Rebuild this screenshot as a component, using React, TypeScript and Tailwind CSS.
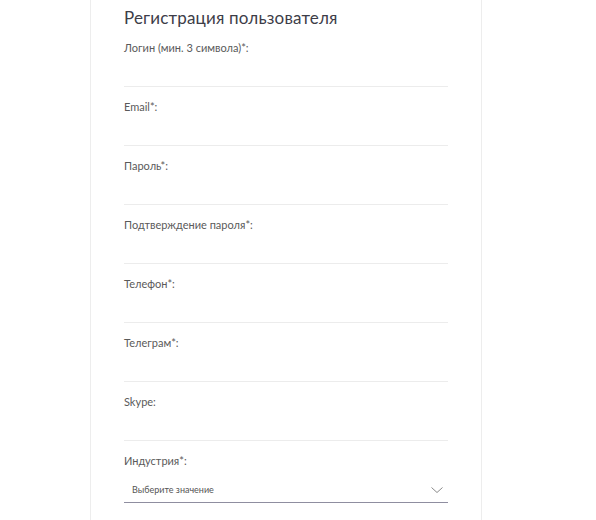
const fields = [
  "Логин (мин. 3 символа)*:",
  "Email*:",
  "Пароль*:",
  "Подтверждение пароля*:",
  "Телефон*:",
  "Телеграм*:",
  "Skype:",
];

function Field({ label }: { label: string }) {
  return (
    <div className="flex flex-col pb-[12px]">
      <label className="text-[11px] leading-4 text-[#5a5a5a]">{label}</label>
      <input className="h-[31px] border-b border-[#ececec] bg-transparent outline-none" />
    </div>
  );
}

export default function App() {
  return (
    <div className="min-h-[520px] bg-white" style={{ fontFamily: "Lato, 'Noto Sans', sans-serif" }}>
      <div className="ml-[90px] min-h-[520px] w-[392px] border-x border-[#ededed] px-[33px] pt-[6px]">
        <h1 className="mb-[10px] text-[17px] leading-6 tracking-[0.01em] text-[#3d3d48]">
          Регистрация пользователя
        </h1>
        {fields.map((f) => (
          <Field key={f} label={f} />
        ))}
        <div className="flex flex-col">
          <label className="text-[11px] leading-4 text-[#5a5a5a]">Индустрия*:</label>
          <div className="mt-[9px] flex h-[25px] items-center justify-between border-b border-[#8f8ea0] pl-2 pr-[5px]">
            <span className="text-[9px] text-[#555]">Выберите значение</span>
            <svg width="12" height="6" viewBox="0 0 12 6" fill="none" stroke="#8a8a8a" strokeWidth="1">
              <path d="M0.5 0.5 L6 5.5 L11.5 0.5" />
            </svg>
          </div>
        </div>
      </div>
    </div>
  );
}
